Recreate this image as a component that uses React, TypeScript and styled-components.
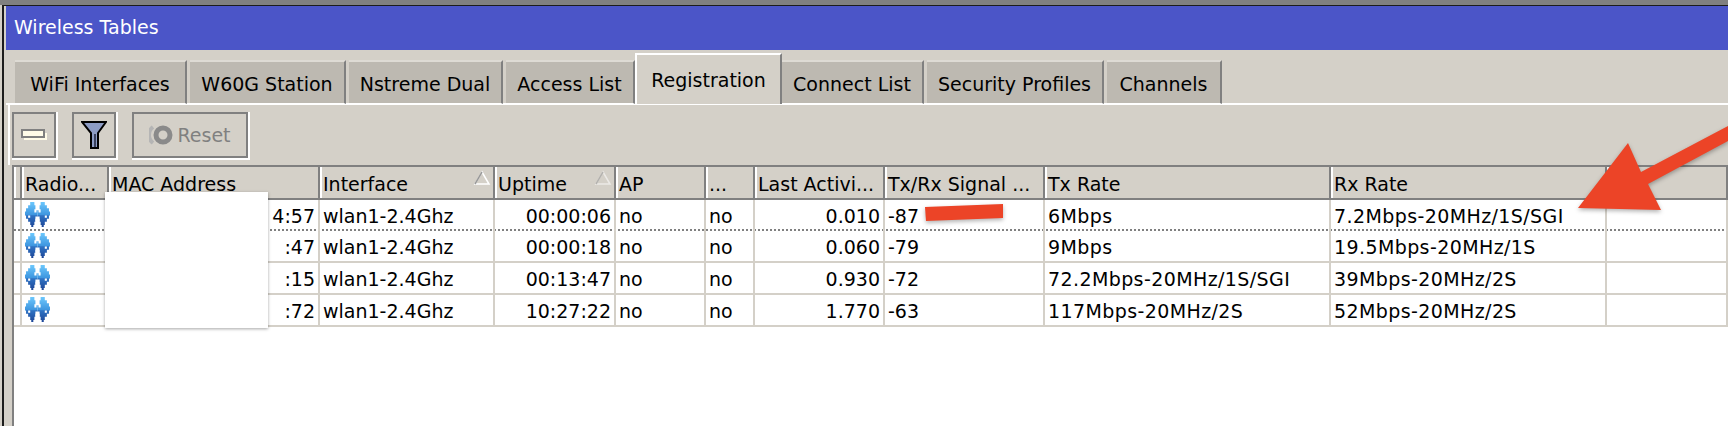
import React from 'react';
import styled, { createGlobalStyle } from 'styled-components';

const GlobalStyle = createGlobalStyle`
    html, body {
        margin: 0;
        padding: 0;
        background: #fff;
    }
`;

const COLUMNS = '8px 87px 211px 175px 121px 90px 49px 130px 160px 286px 276px 1fr';

const Screen = styled.div`
    position: relative;
    width: 1728px;
    height: 426px;
    overflow: hidden;
    background: #d4d0c8;
    border-top: 5px solid #808080;
    box-sizing: border-box;
    font-family: "DejaVu Sans", Tahoma, sans-serif;
    font-size: 19px;
    color: #000;
`;

const Frame = styled.div`
    height: 100%;
    margin-left: 2px;
    padding-left: 2px;
    border-left: 2px solid #1c1c1c;
    border-top: 1px solid #1c1c1c;
    display: flex;
    flex-direction: column;
`;

const TitleBar = styled.div`
    height: 44px;
    flex: none;
    background: #4b55c8;
    color: #fff;
    padding-left: 8px;
    line-height: 43px;
`;

const TabRow = styled.div`
    height: 54px;
    flex: none;
    padding-left: 9px;
    display: flex;
    align-items: flex-end;
    gap: 3px;
`;

const Tab = styled.div<{ $active?: boolean; $w: number }>`
    box-sizing: border-box;
    width: ${props => props.$w}px;
    height: ${props => (props.$active ? 51 : 44)}px;
    margin: ${props => (props.$active ? '0 -3px' : '0')};
    background: ${props => (props.$active ? '#d4d0c8' : '#bdb9b1')};
    border-top: 2px solid ${props => (props.$active ? '#fff' : '#dedbd4')};
    border-left: ${props => (props.$active ? '2px solid #fff' : 'none')};
    border-right: 2px solid #808080;
    border-bottom: ${props => (props.$active ? 'none' : '1px solid #fff')};
    text-align: center;
    line-height: ${props => (props.$active ? 50 : 44)}px;
    white-space: nowrap;
    position: relative;
    z-index: ${props => (props.$active ? 2 : 1)};
`;

const Panel = styled.div`
    flex: 1;
    min-height: 0;
    border-top: 2px solid #fff;
    margin-top: -1px;
    display: flex;
    flex-direction: column;
`;

const Toolbar = styled.div`
    height: 60px;
    flex: none;
    margin-left: 2px;
    border-left: 2px solid #fff;
    padding: 7px 0 0 2px;
    box-sizing: border-box;
    display: flex;
    gap: 16px;
`;

const ToolButton = styled.div<{ $w: number }>`
    box-sizing: border-box;
    width: ${props => props.$w}px;
    height: 46px;
    border: 2px solid #808080;
    box-shadow: 1px 1px 0 1px #fff;
    display: flex;
    align-items: center;
    justify-content: center;
    gap: 4px;
    color: #808080;
`;

const TableArea = styled.div`
    flex: 1;
    min-height: 0;
    margin-left: 6px;
    background: #fff;
    border-left: 2px solid #808080;
    border-top: 2px solid #808080;
`;

const HeaderRow = styled.div`
    display: grid;
    grid-template-columns: ${COLUMNS};
    height: 31px;
    background: #d4d0c8;
    border-bottom: 2px solid #808080;
`;

const HeaderCell = styled.div`
    box-sizing: border-box;
    border-left: 2px solid #fff;
    border-right: 2px solid #808080;
    padding-left: 1px;
    line-height: 34px;
    white-space: nowrap;
    overflow: hidden;
    position: relative;
`;

const SortMark = styled.svg<{ $faint?: boolean }>`
    position: absolute;
    right: 2px;
    top: 3px;
    opacity: ${props => (props.$faint ? 0.55 : 1)};
`;

const Row = styled.div<{ $focus?: boolean }>`
    display: grid;
    grid-template-columns: ${COLUMNS};
    height: ${props => (props.$focus ? 31 : 32)}px;
    box-sizing: border-box;
    border-bottom: 2px ${props => (props.$focus ? 'dotted #808080' : 'solid #d4d0c8')};
`;

const Cell = styled.div<{ $right?: boolean }>`
    box-sizing: border-box;
    border-right: 2px solid #d4d0c8;
    padding: 0 3px;
    line-height: 32px;
    white-space: nowrap;
    text-align: ${props => (props.$right ? 'right' : 'left')};
`;

const RateCell = styled(Cell)`
    letter-spacing: 0.4px;
`;

const HiddenPatch = styled.div`
    position: absolute;
    left: 105px;
    top: 187px;
    width: 163px;
    height: 136px;
    background: #fff;
    box-shadow: 0 1px 3px rgba(0, 0, 0, 0.35);
`;

const Markup = styled.svg`
    position: absolute;
    left: 0;
    top: 0;
    filter: drop-shadow(0 2px 2px rgba(0, 0, 0, 0.3));
`;

const LOBE = 'M5 0h4v3h1v5h2v6h-2v5H9v3H8v2H6v-2H5v-3H3v-3H1v-3H0V9h1V6h2V3h2z';

function RadioIcon() {
    return (
        <svg width="25" height="25" viewBox="0 0 24 24" style={{ display: 'block', marginTop: 2 }}>
            <defs>
                <linearGradient id="radio" gradientUnits="userSpaceOnUse" x1="0" y1="0" x2="0" y2="24">
                    <stop offset="0" stopColor="#6cc8fd" />
                    <stop offset="0.5" stopColor="#3f97e0" />
                    <stop offset="0.55" stopColor="#2f73c4" />
                    <stop offset="1" stopColor="#1c4596" />
                </linearGradient>
            </defs>
            <path fill="url(#radio)" d={LOBE} />
            <path fill="url(#radio)" d={LOBE} transform="matrix(-1 0 0 1 24 0)" />
            <path fill="#fff" d="M3 13h2v2H3zM19 13h2v2h-2zM9 7h2v3H9zM13 7h2v3h-2zM10 16h1v3h-1zM13 16h1v3h-1z" />
        </svg>
    );
}

function Triangle({ faint }: { faint?: boolean }) {
    return (
        <SortMark width="18" height="18" viewBox="0 0 18 18" $faint={faint}>
            <path d="M9 2 L16 14 H2 Z" fill="#d4d0c8" stroke="#fff" strokeWidth="1.5" />
            <path d="M9 2 L2 14" stroke="#999" strokeWidth="1.5" />
        </SortMark>
    );
}

const tabs = [
    { label: 'WiFi Interfaces', w: 172 },
    { label: 'W60G Station', w: 156 },
    { label: 'Nstreme Dual', w: 154 },
    { label: 'Access List', w: 129 },
    { label: 'Registration', w: 147, active: true },
    { label: 'Connect List', w: 142 },
    { label: 'Security Profiles', w: 177 },
    { label: 'Channels', w: 115 },
];

const headers = ['', 'Radio...', 'MAC Address', 'Interface', 'Uptime', 'AP', '...', 'Last Activi...', 'Tx/Rx Signal ...', 'Tx Rate', 'Rx Rate', ''];

const rows = [
    { mac: '4:57', uptime: '00:00:06', last: '0.010', signal: '-87', tx: '6Mbps', rx: '7.2Mbps-20MHz/1S/SGI' },
    { mac: ':47', uptime: '00:00:18', last: '0.060', signal: '-79', tx: '9Mbps', rx: '19.5Mbps-20MHz/1S' },
    { mac: ':15', uptime: '00:13:47', last: '0.930', signal: '-72', tx: '72.2Mbps-20MHz/1S/SGI', rx: '39Mbps-20MHz/2S' },
    { mac: ':72', uptime: '10:27:22', last: '1.770', signal: '-63', tx: '117Mbps-20MHz/2S', rx: '52Mbps-20MHz/2S' },
];

export default function App() {
    return (
        <Screen>
            <GlobalStyle />
            <Frame>
                <TitleBar>Wireless Tables</TitleBar>
                <TabRow>
                    {tabs.map(tab => (
                        <Tab key={tab.label} $w={tab.w} $active={tab.active}>{tab.label}</Tab>
                    ))}
                </TabRow>
                <Panel>
                    <Toolbar>
                        <ToolButton $w={44}>
                            <svg width="26" height="12" viewBox="0 0 26 12">
                                <rect x="1" y="1" width="22" height="7" fill="#fffbe8" stroke="#808080" strokeWidth="2" />
                                <path d="M3 10h22V4" fill="none" stroke="#fffbe8" strokeWidth="2" />
                            </svg>
                        </ToolButton>
                        <ToolButton $w={44}>
                            <svg width="26" height="28" viewBox="0 0 26 28">
                                <path d="M1 1h24l-8 11v15H10V12z" fill="#8d9cc4" stroke="#000" strokeWidth="2" />
                                <path d="M14 13v13" stroke="#39415e" strokeWidth="2" />
                            </svg>
                        </ToolButton>
                        <ToolButton $w={116}>
                            <svg width="24" height="22" viewBox="0 0 24 22">
                                <circle cx="14" cy="11" r="7" fill="none" stroke="#8a8a8a" strokeWidth="5" />
                                <path d="M4 3 A 10 10 0 0 0 4 19" fill="none" stroke="#b5b5b5" strokeWidth="4" />
                            </svg>
                            Reset
                        </ToolButton>
                    </Toolbar>
                    <TableArea>
                        <HeaderRow>
                            {headers.map((label, i) => (
                                <HeaderCell key={i}>
                                    {label}
                                    {label === 'Interface' && <Triangle />}
                                    {label === 'Uptime' && <Triangle faint />}
                                </HeaderCell>
                            ))}
                        </HeaderRow>
                        {rows.map((row, i) => (
                            <Row key={row.uptime} $focus={i === 0}>
                                <Cell />
                                <Cell><RadioIcon /></Cell>
                                <Cell $right>{row.mac}</Cell>
                                <Cell>wlan1-2.4Ghz</Cell>
                                <Cell $right>{row.uptime}</Cell>
                                <Cell>no</Cell>
                                <Cell>no</Cell>
                                <Cell $right>{row.last}</Cell>
                                <Cell>{row.signal}</Cell>
                                <RateCell>{row.tx}</RateCell>
                                <RateCell>{row.rx}</RateCell>
                                <Cell />
                            </Row>
                        ))}
                    </TableArea>
                </Panel>
            </Frame>
            <HiddenPatch />
            <Markup width="1728" height="426" viewBox="0 5 1728 426">
                <path d="M925 207 L1003 204 L1003 218 L926 221 Z" fill="#ec4427" />
                <path d="M1578 208 L1628 143 L1641 172 L1728 126 L1728 141 L1648 184 L1661 210 Z" fill="#ec4427" />
            </Markup>
        </Screen>
    );
}
